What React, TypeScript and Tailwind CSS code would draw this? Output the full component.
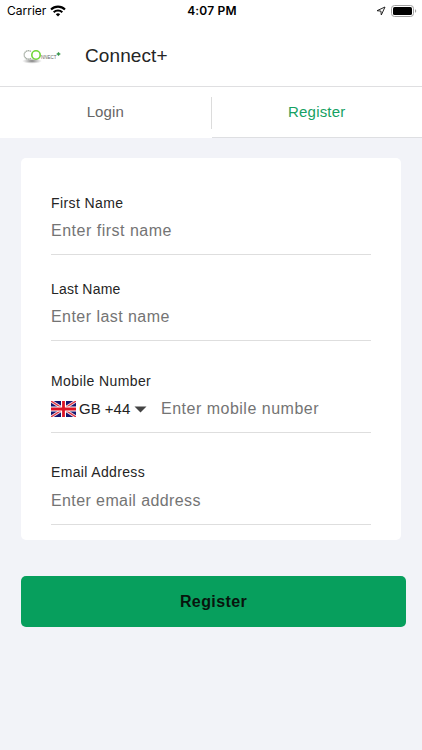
import { ReactNode } from "react";

const fields = [
  {
    label: "First Name",
    placeholder: "Enter first name",
    spacing: "mt-0",
    row: "mt-2 h-[34px]",
    labelTracking: "tracking-[0.4px]",
    tracking: "tracking-[0.5px]",
  },
  {
    label: "Last Name",
    placeholder: "Enter last name",
    spacing: "mt-6",
    row: "mt-2 h-[34px]",
    labelTracking: "tracking-[0.2px]",
    tracking: "tracking-[0.45px]",
  },
  {
    label: "Mobile Number",
    placeholder: "Enter mobile number",
    spacing: "mt-[30px]",
    row: "mt-2 h-[34px]",
    labelTracking: "tracking-[0.4px]",
    tracking: "tracking-[0.5px]",
    phone: true,
  },
  {
    label: "Email Address",
    placeholder: "Enter email address",
    spacing: "mt-[29px]",
    row: "mt-[9px] h-[34px]",
    labelTracking: "tracking-[0.35px]",
    tracking: "tracking-[0.4px]",
  },
];

function WifiIcon() {
  return (
    <svg width="16" height="12" viewBox="0 0 16 12" fill="none" stroke="#000" strokeWidth="2.1">
      <path d="M1 4.5a10 10 0 0 1 14 0" />
      <path d="M3.7 7.2a6.2 6.2 0 0 1 8.6 0" />
      <path d="M8 11.6 5.8 9.3a3.2 3.2 0 0 1 4.4 0z" fill="#000" stroke="none" />
    </svg>
  );
}

function LocationIcon() {
  return (
    <svg width="10" height="10" viewBox="0 0 10 10" fill="none" stroke="#222" strokeWidth="1" strokeLinejoin="round">
      <path d="M9 1 1 4.7l3.9.4L5.3 9z" />
    </svg>
  );
}

function BatteryIcon() {
  return (
    <svg width="26" height="12" viewBox="0 0 26 12">
      <rect x="0.5" y="0.5" width="22" height="11" rx="3" fill="#fff" stroke="#a0a0a0" />
      <rect x="2" y="2" width="19" height="8" rx="1.6" fill="#000" />
      <path d="M24 4.2v3.6c.8-.3 1.2-1 1.2-1.8S24.8 4.5 24 4.2z" fill="#a0a0a0" />
    </svg>
  );
}

function Logo() {
  return (
    <svg width="40" height="18" viewBox="0 0 40 18">
      <defs>
        <radialGradient id="shade">
          <stop offset="0" stopColor="#666" stopOpacity="0.9" />
          <stop offset="1" stopColor="#999" stopOpacity="0" />
        </radialGradient>
      </defs>
      <ellipse cx="10" cy="14" rx="10" ry="2.8" fill="url(#shade)" />
      <path d="M9 4.6A4.2 4.2 0 1 0 9 11.2" fill="none" stroke="#a5ada3" strokeWidth="1.3" strokeDasharray="1.5 0.4" />
      <circle cx="14" cy="8" r="4.2" fill="#fff" stroke="#6fd636" strokeWidth="1.6" />
      <text x="19" y="11.8" fontSize="5" textLength="15.5" lengthAdjust="spacingAndGlyphs" fill="#666">
        NNECT
      </text>
      {/* Small plus above the wordmark */}
      <path d="M36.5 5.2v3.6M34.7 7h3.6" stroke="#36964a" strokeWidth="1.3" />
    </svg>
  );
}

function Flag() {
  return (
    <svg width="25" height="16" viewBox="0 0 25 16">
      <rect width="25" height="16" fill="#15156f" />
      <path d="M0 0 25 16M25 0 0 16" stroke="#f3dfe8" strokeWidth="3" />
      <path d="M0 0 25 16M25 0 0 16" stroke="#e0303c" strokeWidth="1.2" />
      <path d="M12.5 0V16M0 8H25" stroke="#fff" strokeWidth="5" />
      <path d="M12.5 0V16M0 8H25" stroke="#dc1426" strokeWidth="2.8" />
    </svg>
  );
}

function CountryPicker() {
  return (
    <button type="button" className="flex h-5 w-[110px] shrink-0 items-center text-[#222]">
      <Flag />
      <span className="ml-[3px] w-[52px] text-left text-[15px] whitespace-nowrap">GB +44</span>
      <svg className="ml-[3px]" width="13" height="7" viewBox="0 0 13 7">
        <path d="M0.5 0.5h12l-6 6z" fill="#444" />
      </svg>
    </button>
  );
}

function Tab({ children }: { children: ReactNode }) {
  return <div className="flex h-full flex-1 items-center justify-center">{children}</div>;
}

export default function App() {
  return (
    <div className="h-[750px] w-full overflow-hidden bg-[#f2f3f8] font-['Liberation_Sans',Arial,sans-serif]">
      {/* Status bar */}
      <div className="grid h-[22px] grid-cols-3 items-center bg-white pr-[5px] pl-[7px] font-['Inter',sans-serif] text-xs text-black">
        <div className="flex items-center gap-1">
          <span>Carrier</span>
          <WifiIcon />
        </div>
        <span className="text-center font-semibold tracking-[0.2px]">4:07 PM</span>
        <div className="flex items-center justify-end gap-[5px]">
          <LocationIcon />
          <BatteryIcon />
        </div>
      </div>

      {/* Header */}
      <header className="flex h-[65px] items-center border-b border-[#dfdfe1] bg-white pt-1 pl-[22px]">
        <Logo />
        <h1 className="ml-[23px] text-[19px] tracking-[0.1px] text-[#252525]">Connect+</h1>
      </header>

      {/* Tabs */}
      <div className="flex h-[51px] items-center bg-white text-[15px]">
        <Tab>
          <span className="tracking-[0.1px] text-[#666]">Login</span>
        </Tab>
        <div className="h-8 w-px bg-[#dcdcdc]"></div>
        <div className="flex h-full flex-1 items-center justify-center border-b border-[#dedfe2] pt-px">
          <span className="tracking-[0.2px] text-[#16a163]">Register</span>
        </div>
      </div>

      {/* Form */}
      <form className="mx-[21px] mt-5 h-[382px] rounded-[5px] bg-white px-[30px] pt-[35px]">
        {fields.map((field) => (
          <div key={field.label} className={field.spacing}>
            <label className={`block text-sm leading-5 text-[#252525] ${field.labelTracking}`}>{field.label}</label>
            <div className={`flex items-start border-b border-[#dedede] ${field.row}`}>
              {field.phone && <CountryPicker />}
              <span className={`text-base leading-5 whitespace-nowrap text-[#747474] ${field.tracking}`}>
                {field.placeholder}
              </span>
            </div>
          </div>
        ))}
      </form>

      <button className="mt-9 ml-[21px] flex h-[51px] w-[385px] items-center justify-center rounded-[5px] bg-[#079f5d] text-base font-bold tracking-[0.4px] text-[#07150d]">
        Register
      </button>
    </div>
  );
}
